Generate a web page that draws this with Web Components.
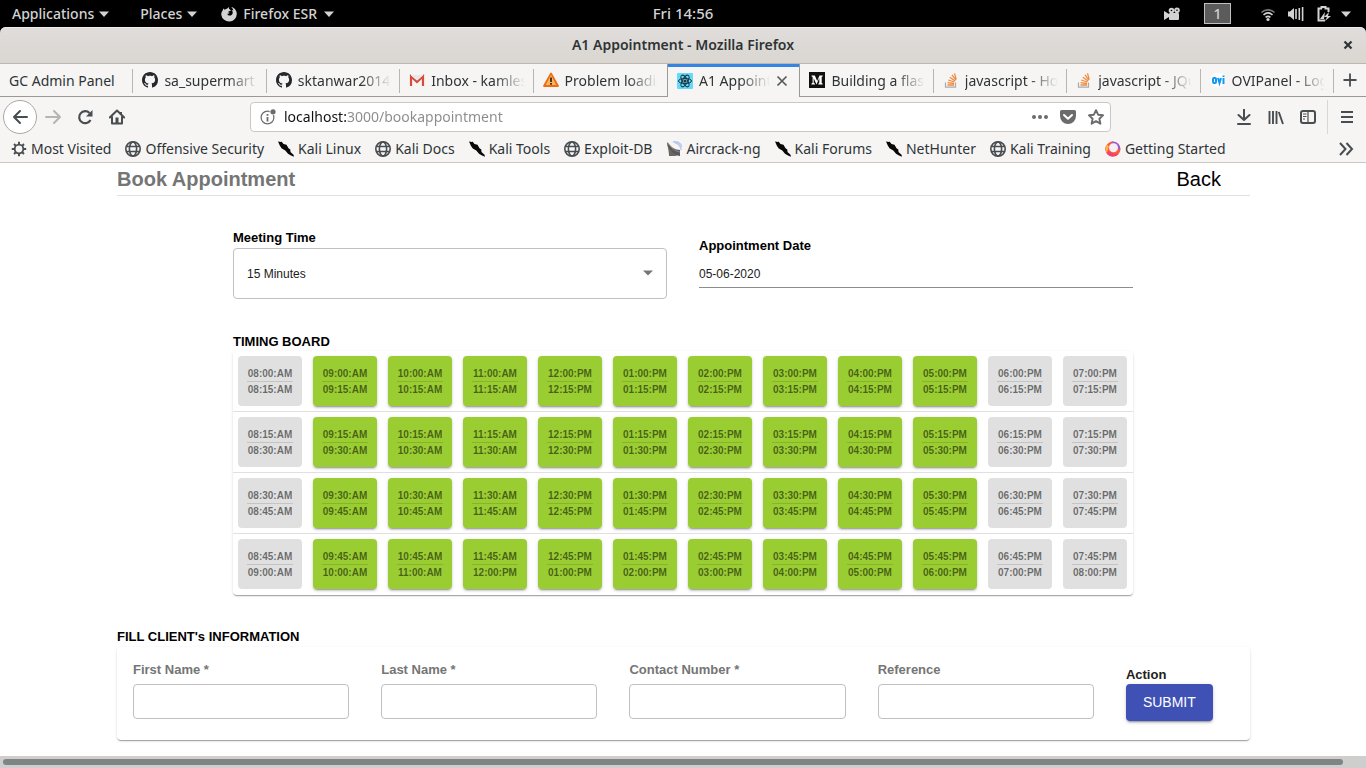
<!DOCTYPE html>
<html lang="en">
<head>
<meta charset="utf-8">
<title>A1 Appointment</title>
<style>
html, body { margin: 0; height: 100%; background: #fff; }
body { font-family: "Liberation Sans", Arial, sans-serif; }
</style>
</head>
<body>
<desk-shell></desk-shell>
<script>
const UI = '"Noto Sans", "Open Sans", sans-serif';

function define(name, html, setup) {
  const template = document.createElement('template');
  template.innerHTML = html;
  customElements.define(name, class extends HTMLElement {
    connectedCallback() {
      if (this.shadowRoot) return;
      const root = this.attachShadow({ mode: 'open' });
      root.append(template.content.cloneNode(true));
      if (setup) setup(this, root);
    }
  });
}

/* ---------- icons ---------- */
const ICONS = {
  caret: '<path d="M3 5.5h10L8 11z" fill="#d3d3d3"/>',
  fox: '<path d="M2.2 2.5l1.6 1.3C4.600 3.200 5.500 2.700 6.300 2.600L7.800 1l.3 2c1 .3 1.700 1 1.600 1.800L7.500 5.500c-.6.5.1 1.400 1.200 1.300-.5 1-1.500 1.200-2.500.9.5 1.600 2.200 2.300 3.700 1.700 2.300-.9 2.300-4 .7-5.400l1.700.5C11.900 3 11.300 1.900 10.200 1c3.400.7 5.600 3.500 5.600 7A7.800 7.800 0 0 1 .3 9C.1 7 .8 5.500 1.700 4.500z" fill="#d3d3d3"/>',
  camera: '<g fill="#d3d3d3"><circle cx="7.500" cy="4.500" r="2.800"/><circle cx="13" cy="4.200" r="2.800"/><rect x="5" y="7" width="10" height="7" rx="1"/><path d="M0 5l5 3v3l-5 3z"/></g><circle cx="7.500" cy="4.500" r=".8"/><circle cx="13" cy="4.200" r=".8"/>',
  wifi: '<g fill="none" stroke="#d3d3d3" stroke-width="1.700"><path d="M1.500 6.500c3.700-3.600 9.300-3.600 13 0" stroke="#777"/><path d="M3.500 9c2.700-2.500 6.300-2.500 9 0"/><path d="M5.600 11.400c1.500-1.300 3.300-1.300 4.800 0"/></g><circle cx="8" cy="13.500" r="1.600" fill="#d3d3d3"/>',
  volume: '<path d="M0 5.500h2L6 2v12L2 10.500H0z" fill="#d3d3d3"/><path d="M8 3v10M11.300 2v12M14.600 1v14" stroke="#d3d3d3" stroke-width="1.600"/>',
  battery: '<path d="M5.500 2.500V1h4v1.500h3V6M9 14.500H2.500v-12H6" fill="none" stroke="#d3d3d3" stroke-width="2"/><path d="M4 13l5-7-1 7zM13 6l-5 5h3l-2 4 6-5h-3z" fill="#d3d3d3"/>',
  close: '<path d="M3.500 3.500l9 9m0-9l-9 9" stroke="#555b5d" stroke-width="1.700"/>',
  bigclose: '<path d="M4.500 4.500l7 7m0-7l-7 7" stroke="#2e3436" stroke-width="2.200"/>',
  github: '<path fill="#24292e" d="M8 0C3.580 0 0 3.580 0 8c0 3.540 2.290 6.530 5.470 7.590.4.070.55-.17.55-.38 0-.19-.01-.82-.01-1.490-2.010.37-2.530-.49-2.690-.94-.09-.23-.48-.94-.82-1.130-.28-.15-.68-.52-.01-.53.63-.01 1.080.58 1.230.82.72 1.210 1.870.87 2.330.66.07-.52.28-.87.51-1.070-1.780-.2-3.640-.89-3.640-3.950 0-.87.31-1.590.82-2.150-.08-.2-.36-1.020.08-2.120 0 0 .67-.21 2.200.82.64-.18 1.320-.27 2-.27s1.360.09 2 .27c1.530-1.040 2.200-.82 2.200-.82.44 1.100.16 1.920.08 2.120.51.56.82 1.270.82 2.150 0 3.070-1.870 3.750-3.650 3.950.29.25.54.73.54 1.480 0 1.070-.01 1.930-.01 2.200 0 .21.15.46.55.38A8 8 0 0 0 16 8c0-4.420-3.580-8-8-8z"/>',
  gmail: '<path d="M1 3h14v11H1z" fill="#e8e8e8"/><path d="M3 5l5 4.500L13 5v9H3z" fill="#f7f5f5"/><path d="M2 14V4.500L8 10l6-5.500V14" fill="none" stroke="#d54b3d" stroke-width="2.200"/><path d="M2 3l6 5 6-5" fill="none" stroke="#f6eeee"/>',
  warning: '<path d="M8 1.500L15 14H1z" fill="#f79a2c" stroke="#ec6d13" stroke-width="1.800" stroke-linejoin="round"/><path d="M8 3L13 13H3z" fill="#fbb45e"/><path d="M8 5.500v4.500M8 11v1.700" stroke="#3a2a1a" stroke-width="1.800"/>',
  react: '<rect width="16" height="16" rx="1" fill="#61dafb"/><g fill="none" stroke="#20323c" stroke-width="1"><ellipse cx="8" cy="8" rx="6.500" ry="2.600"/><ellipse cx="8" cy="8" rx="6.500" ry="2.600" transform="rotate(60 8 8)"/><ellipse cx="8" cy="8" rx="6.500" ry="2.600" transform="rotate(120 8 8)"/></g><circle cx="8" cy="8" r="1.500" fill="#20323c"/>',
  medium: '<rect width="16" height="16" fill="#12100e"/><path d="M2.500 3.500h3.300L8.200 9l2.300-5.500h3.200v.8l-1 .7v6l1 .7v.8H9.300v-.8l1-.8V6l-2.800 6.500L4.700 6.200v4.500l1.300 1v.8H2.400v-.8l1.200-1V5L2.500 4.200z" fill="#fff"/>',
  stack: '<path d="M2.500 10.500v4.700h10v-4.700" fill="none" stroke="#aaa" stroke-width="1.200"/><path d="M4.500 13h6.500M4.600 10.600l6.400.9M5.200 8l6.200 2M6.800 5.300l5.300 3.700M9 2.900l3.900 5.200M11.500 1.400l1.700 6" stroke="#f08a3c" stroke-width="1.300"/>',
  ovi: '<circle cx="8" cy="8" r="7.500" fill="#fff"/><g fill="none" stroke="#1199f2" stroke-width="2"><rect x="3" y="6" width="3" height="5" rx="1"/><path d="M8 6l1.500 5L11 6M13.500 6v6M13.500 3.500V5"/></g>',
  plus: '<path d="M8 1.500v13M1.500 8h13" stroke="#474d50" stroke-width="1.800"/>',
  back: '<path d="M15 8H2M8 2L2 8l6 6" fill="none" stroke="#474d50" stroke-width="2" stroke-linecap="round" stroke-linejoin="round"/>',
  forward: '<path d="M1 8h14M9 2l6 6-6 6" fill="none" stroke="#b5b5b4" stroke-width="2" stroke-linecap="round" stroke-linejoin="round"/>',
  reload: '<path d="M13.500 11A6 6 0 1 1 12.500 4" fill="none" stroke="#474d50" stroke-width="2.200"/><path d="M15.500 1v6.500H9z" fill="#474d50"/>',
  home: '<path d="M.8 8.500L8 1.500l7.200 7M3 8v6.500h10V8" fill="none" stroke="#474d50" stroke-width="2" stroke-linecap="round" stroke-linejoin="round"/><path d="M6.500 8.500h3V15h-3z" fill="#474d50"/><path d="M12 3v2" stroke="#474d50" stroke-width="2"/>',
  info: '<circle cx="7.500" cy="8.500" r="6.400" fill="none" stroke="#6b6b6b" stroke-width="1.200"/><path d="M7.500 5v1.700M7.500 8v4.500" stroke="#6b6b6b" stroke-width="1.800"/><circle cx="13" cy="2.800" r="3.400" fill="#fff"/><circle cx="13" cy="2.800" r="2.600" fill="#6b6b6b"/>',
  dots: '<g fill="#6b6b6b"><circle cx="2" cy="8" r="2"/><circle cx="8" cy="8" r="2"/><circle cx="14" cy="8" r="2"/></g>',
  pocket: '<path d="M1.500 1h13A1.500 1.500 0 0 1 16 2.500V7A8 8 0 0 1 0 7V2.500A1.500 1.500 0 0 1 1.500 1z" fill="#6b6b6b"/><path d="M4 6l4 3.800L12 6" fill="none" stroke="#fff" stroke-width="2" stroke-linecap="round" stroke-linejoin="round"/>',
  star: '<path d="M8 1.200l2.100 4.500 4.900.6-3.600 3.400 1 5L8 12.200l-4.400 2.500 1-5L1 6.300l4.900-.6z" fill="none" stroke="#6b6b6b" stroke-width="1.900" stroke-linejoin="round"/>',
  download: '<path d="M8 .5v10M2.500 6L8 11l5.500-5M2 15h12" fill="none" stroke="#474d50" stroke-width="2" stroke-linecap="round" stroke-linejoin="round"/>',
  library: '<path d="M1.500 2v13M5 2v13M8.500 2v13M10.800 3l4.200 12" stroke="#474d50" stroke-width="1.900"/>',
  sidebar: '<rect x="1" y="2" width="14" height="12" rx="2" fill="none" stroke="#474d50" stroke-width="2"/><path d="M8 2v12M3 5h3.500M3 7.500h3.500M3 10h2" stroke="#474d50" stroke-width="1.200"/>',
  menu: '<path d="M2 3h12M2 8h12M2 13h12" stroke="#474d50" stroke-width="2"/>',
  gear: '<circle cx="8" cy="8" r="4.300" fill="none" stroke="#474d50" stroke-width="1.800"/><path d="M8 .8v3M8 12.200v3M.8 8h3M12.200 8h3M3 3l2 2M11 11l2 2M3 13l2-2M11 5l2-2" stroke="#474d50" stroke-width="1.900"/>',
  globe: '<g fill="none" stroke="#474d50" stroke-width="1.600"><circle cx="8" cy="8" r="7.200"/><ellipse cx="8" cy="8" rx="3.600" ry="7"/><path d="M1.500 5.500h13M1.500 10.500h13"/></g>',
  kali: '<path d="M0 .5l3 .5.500-.5L5.500 3l3 .7 2 3.500 1.800 1.300L12.500 11l3 2.800.5 2-3-1.300-3-1.700-2.700-3.300-3.500-2L2 5z" fill="#080808"/>',
  aircrack: '<path d="M1 1c1 9 5 13 13 14V9C9 9 5 6 1 1z" fill="#57595b"/><path d="M1 1c1 7 2 9 2 14h8C6 12 3 8 1 1z" fill="#6b675e"/><path d="M2 2c3 5 7 8 12 9" fill="none" stroke="#8d8d8d"/><path d="M9 2c3 0 6 3 6 7M7 1c4-1 8 1 9 5" fill="none" stroke="#b9caec" stroke-width="1.500"/>',
  getting: '<circle cx="8" cy="8" r="7.500" fill="#ff5a3c"/><path d="M8 15.500A7.500 7.500 0 0 1 1 5c0 5 6 8 12.500 8A7 7 0 0 1 8 15.500z" fill="#f2416f"/><path d="M1.500 4A7.500 7.500 0 0 0 2 12l2-7z" fill="#ffb23e"/><path d="M6 .8a7.500 7.500 0 0 1 9 9L12 5z" fill="#8860ee"/><circle cx="8.500" cy="6.800" r="4.500" fill="#f4eef5"/>',
  more: '<path d="M2 2l5.500 6L2 14M8.500 2L14 8l-5.500 6" fill="none" stroke="#474d50" stroke-width="2"/>',
  drop: '<path d="M3 5.500h10L8 10.500z" fill="#757575"/>'
};
define('ui-icon', `<style>:host{display:block;flex:none;width:16px;height:16px}svg{display:block;width:100%;height:100%}</style>`,
  (el, root) => root.append(document.createRange().createContextualFragment(
    `<svg viewBox="0 0 16 16" aria-hidden="true">${ICONS[el.getAttribute('name')]}</svg>`)));

/* ---------- desktop panel ---------- */
define('top-panel', `<style>
:host{display:grid;grid-template-columns:1fr auto 1fr;align-items:center;height:27px;background:#000;color:#d3d3d3;font:500 14px/27px ${UI}}
nav,.tray{display:flex;align-items:center}
nav{padding-left:12px;gap:28px}
time{font-size:15px}
button{display:flex;align-items:center;border:0;padding:0;background:none;color:inherit;font:inherit;gap:2px}
.app{gap:6px;margin-left:-7px}
.app span{display:flex;align-items:center;gap:4px}
.tray{justify-content:flex-end;padding-right:12px;gap:12px}
.ws{box-sizing:border-box;width:27px;height:21px;line-height:19px;border:1px solid #c0c0c0;background:#5b5b5b;justify-content:center;margin:0 17px 0 12px}
.tray ui-icon:last-child{margin-left:-6px}
</style>
<nav><button>Applications<ui-icon name="caret"></ui-icon></button><button>Places<ui-icon name="caret"></ui-icon></button><button class="app"><ui-icon name="fox"></ui-icon><span>Firefox ESR<ui-icon name="caret"></ui-icon></span></button></nav>
<time>Fri 14:56</time>
<div class="tray"><ui-icon name="camera"></ui-icon><button class="ws">1</button><ui-icon name="wifi"></ui-icon><ui-icon name="volume"></ui-icon><ui-icon name="battery"></ui-icon><ui-icon name="caret"></ui-icon></div>`);

define('title-bar', `<style>
:host{display:block;background:#000}
div{display:grid;grid-template-columns:1fr auto 1fr;align-items:center;height:36px;border-bottom:1px solid #bdb7b0;border-radius:6px 6px 0 0;background:linear-gradient(#e0ddda,#dad6d2);box-shadow:inset 0 1px #edebe9;color:#2e3436;font:600 14px/36px ${UI}}
button{grid-column:3;justify-self:end;margin-right:10px;border:0;padding:0;background:none}
span{grid-column:2}
</style><div><span><slot></slot></span><button aria-label="Close window"><ui-icon name="bigclose"></ui-icon></button></div>`);

/* ---------- tabs ---------- */
define('browser-tab', `<style>
:host{display:flex;min-width:0;box-sizing:border-box;height:33px;align-items:center;padding:0 9px;border-bottom:1px solid #9a9996;
 background:linear-gradient(#b9b6b2,#b9b6b2) right 5px/1px 24px no-repeat}
:host([active]){border:1px solid #9a9996;border-width:0 1px;background:linear-gradient(#3584e4,#3584e4) top/100% 3px no-repeat #f6f5f4}
:host([before]){background:none}
ui-icon{margin-right:6px}
a{flex:1;min-width:0;overflow:hidden;white-space:nowrap;color:#2e3436;text-decoration:none;font:14px/33px ${UI}}
a.fade{-webkit-mask-image:linear-gradient(to left,transparent,#000 30px);mask-image:linear-gradient(to left,transparent,#000 30px)}
button{border:0;padding:0;background:none;margin:0 0 0 4px}
button ui-icon{margin:0}
</style><a href="#"><slot></slot></a>`, (el, root) => {
  const link = root.querySelector('a'), icon = el.getAttribute('icon');
  if (icon) { link.insertAdjacentHTML('beforebegin', `<ui-icon name="${icon}"></ui-icon>`); link.className = 'fade'; }
  if (el.hasAttribute('active')) link.insertAdjacentHTML('afterend', '<button aria-label="Close tab"><ui-icon name="close"></ui-icon></button>');
});
define('tab-strip', `<style>
:host{display:flex;background:#f6f5f4}
slot{display:grid;grid-auto-flow:column;grid-auto-columns:minmax(0,1fr);flex:1;min-width:0}
button{box-sizing:border-box;width:32px;height:33px;border:0;border-bottom:1px solid #9a9996;background:none;padding:0;display:grid;place-items:center}
</style><slot></slot><button aria-label="New tab"><ui-icon name="plus"></ui-icon></button>`);

/* ---------- navigation ---------- */
define('nav-bar', `<style>
:host{display:flex;align-items:center;height:40px;background:#f6f5f4}
button{border:0;padding:0;background:none;display:grid;place-items:center;width:32px;height:32px;flex:none}
.back{box-sizing:border-box;width:34px;height:34px;border:1px solid #a9a8a6;border-radius:50%;background:#fff;margin:0 0 0 3px}
.left{display:flex;flex:0 0 250px;align-items:center}
.url{box-sizing:border-box;flex:1;min-width:0;height:30px;display:flex;align-items:center;border:1px solid #cdc7c2;border-radius:4px;background:#fff;padding:0 0 0 9px}
.url button{width:28px;height:28px}
input{flex:1;min-width:0;border:0;outline:0;margin-left:8px;padding:0;height:28px;font:14px/28px ${UI};
 color:transparent;background:linear-gradient(90deg,#111 62px,#8b8b8b 62px);-webkit-background-clip:text;background-clip:text}
.right{display:flex;flex:0 0 255px;justify-content:flex-end;align-items:center}
.menu{border-left:1px solid #d9d7d5;width:39px;height:34px;margin-left:3px}
</style>
<div class="left"><button class="back" aria-label="Back"><ui-icon name="back"></ui-icon></button><button aria-label="Forward"><ui-icon name="forward"></ui-icon></button><button aria-label="Reload"><ui-icon name="reload"></ui-icon></button><button aria-label="Home"><ui-icon name="home"></ui-icon></button></div>
<div class="url"><ui-icon name="info"></ui-icon><input aria-label="Address" value="localhost:3000/bookappointment"><button aria-label="Page actions"><ui-icon name="dots"></ui-icon></button><button aria-label="Pocket"><ui-icon name="pocket"></ui-icon></button><button aria-label="Bookmark"><ui-icon name="star"></ui-icon></button></div>
<div class="right"><button aria-label="Downloads"><ui-icon name="download"></ui-icon></button><button aria-label="Library"><ui-icon name="library"></ui-icon></button><button aria-label="Sidebars"><ui-icon name="sidebar"></ui-icon></button><button class="menu" aria-label="Menu"><ui-icon name="menu"></ui-icon></button></div>`);

define('bookmark-link', `<style>
:host{display:block;flex:none}
a{display:flex;align-items:center;gap:4px;color:#2e3436;text-decoration:none;font:14px/22px ${UI};white-space:nowrap}
</style><a href="#"><slot></slot></a>`, (el, root) =>
  root.querySelector('a').insertAdjacentHTML('afterbegin', `<ui-icon name="${el.getAttribute('icon')}"></ui-icon>`));
define('bookmark-bar', `<style>
:host{display:flex;align-items:center;gap:14px;height:24px;padding:0 12px 1px 11px;background:#f6f5f4;border-bottom:1px solid #cdc7c2}
button{margin-left:auto;border:0;padding:0;background:none}
</style><slot></slot><button aria-label="More bookmarks"><ui-icon name="more"></ui-icon></button>`);

/* ---------- booking page ---------- */
define('page-heading', `<style>
:host{display:flex;justify-content:space-between;align-items:center;height:32px;border-bottom:1px solid #e0e0e0;padding-right:29px}
h1{margin:0;font-size:20px;line-height:32px;color:#757575}
a{font-size:20px;line-height:32px;color:#000;text-decoration:none}
</style><h1><slot></slot></h1><a href="#">Back</a>`);

define('meeting-select', `<style>
:host{display:block}
label{display:block;font-weight:700;font-size:13px;line-height:20px}
div{position:relative}
select{appearance:none;box-sizing:border-box;width:100%;height:51px;border:1px solid #c0c0c0;border-radius:4px;background:#fff;padding:0 32px 0 13px;color:#212121;font:12px "Liberation Sans",Arial,sans-serif}
ui-icon{position:absolute;right:11px;top:17px;pointer-events:none}
</style><label for="m">Meeting Time</label><div><select id="m"><option>15 Minutes</option><option>30 Minutes</option></select><ui-icon name="drop"></ui-icon></div>`);

define('date-field', `<style>
:host{display:block;padding-top:8px}
label{display:block;font-weight:700;font-size:13px;line-height:20px}
input{display:block;box-sizing:border-box;width:100%;height:32px;border:0;border-bottom:1px solid #8c8c8c;outline:0;background:none;padding:4px 0 0;color:#212121;font:12px "Liberation Sans",Arial,sans-serif}
</style><label for="d">Appointment Date</label><input id="d" value="05-06-2020">`);

define('time-slot', `<style>
:host{display:block}
button{display:block;box-sizing:border-box;width:100%;height:50px;border:0;border-radius:4px;padding:2px 4px 0;background:#9acd32;color:rgba(0,0,0,.54);font:700 10px/16px "Liberation Sans",Arial,sans-serif;box-shadow:0 3px 1px -2px rgba(0,0,0,.2),0 2px 2px rgba(0,0,0,.14),0 1px 4px rgba(0,0,0,.12)}
button:disabled{background:#e0e0e0;box-shadow:none}
span{display:block;width:46px;margin:auto;white-space:nowrap}
span+span{box-shadow:0 -1px rgba(0,0,0,.12)}
</style><button><span></span><span></span></button>`, (el, root) => {
  const [from, to] = root.querySelectorAll('span');
  from.textContent = el.getAttribute('from');
  to.textContent = el.getAttribute('to');
  root.querySelector('button').disabled = el.hasAttribute('closed');
});

define('timing-board', `<style>
:host{display:block}
h2{margin:0;font-size:13px;line-height:18px}
table{width:100%;table-layout:fixed;border-collapse:separate;border-spacing:0;border-radius:4px;box-shadow:0 2px 1px -1px rgba(0,0,0,.2),0 1px 1px rgba(0,0,0,.14),0 1px 3px rgba(0,0,0,.12)}
td{padding:5px 6px 5px 5px;border-bottom:1px solid #e0e0e0}
tr:last-child td{border-bottom-color:transparent}
</style><h2>TIMING BOARD</h2><table><tbody></tbody></table>`, (el, root) => {
  const label = m => {
    const h = Math.floor(m / 60), pad = n => String(n).padStart(2, '0');
    return `${pad(h % 12 || 12)}:${pad(m % 60)}:${h < 12 ? 'AM' : 'PM'}`;
  };
  let rows = '';
  for (let q = 0; q < 60; q += 15) {
    rows += '<tr>';
    for (let h = 8; h < 20; h++) {
      const t = h * 60 + q;
      rows += `<td><time-slot from="${label(t)}" to="${label(t + 15)}"${h < 9 || h > 17 ? ' closed' : ''}></time-slot></td>`;
    }
    rows += '</tr>';
  }
  root.querySelector('tbody').innerHTML = rows;
});

define('text-field', `<style>
:host{display:block}
label{display:block;font-weight:700;font-size:13px;line-height:16px;color:#757575;margin-bottom:6px}
input{display:block;box-sizing:border-box;width:100%;height:35px;border:1px solid #c0c0c0;border-radius:4px;background:#fff;padding:0 12px;font:13px "Liberation Sans",Arial,sans-serif}
</style><label for="i"></label><input id="i">`, (el, root) => {
  root.querySelector('label').textContent = el.getAttribute('label');
});

define('client-form', `<style>
:host{display:block}
h2{margin:0;font-size:13px;line-height:20px}
form{display:grid;grid-template-columns:2fr 2fr 2fr 2fr 1fr;gap:32px;padding:15px 16px 19px;border-radius:4px;box-shadow:0 2px 1px -1px rgba(0,0,0,.2),0 1px 1px rgba(0,0,0,.14),0 1px 3px rgba(0,0,0,.12)}
.act{padding-top:4px}
label{display:block;font-weight:700;font-size:13px;line-height:18px;color:#212121}
button{height:37px;border:0;border-radius:4px;padding:0 17px 2px;background:#3f51b5;color:#fff;font:14px "Liberation Sans",Arial,sans-serif;box-shadow:0 3px 1px -2px rgba(0,0,0,.2),0 2px 2px rgba(0,0,0,.14),0 1px 5px rgba(0,0,0,.12)}
</style><h2>FILL CLIENT's INFORMATION</h2>
<form><text-field label="First Name *"></text-field><text-field label="Last Name *"></text-field><text-field label="Contact Number *"></text-field><text-field label="Reference"></text-field><div class="act"><label for="s">Action</label><button id="s" type="button">SUBMIT</button></div></form>`);

define('booking-page', `<style>
:host{display:block;flex:1;padding:0 116px 0 117px}
.inner{padding:0 117px 0 116px}
.row{display:grid;grid-template-columns:1fr 1fr;gap:32px;margin:32px 0 34px}
client-form{margin-top:32px}
</style><page-heading>Book Appointment</page-heading>
<div class="inner"><div class="row"><meeting-select></meeting-select><date-field></date-field></div><timing-board></timing-board></div>
<client-form></client-form>`);

define('scroll-track', `<style>
:host{display:block;box-sizing:border-box;height:12px;border-top:1px solid #d3cdc4;background:#cecece;padding:2px 23px 3px 3px}
div{height:6px;border-radius:3px;background:#7f8584}
</style><div></div>`);

define('desk-shell', `<style>
:host{display:flex;flex-direction:column;min-height:100vh}
</style>
<top-panel></top-panel>
<title-bar>A1 Appointment - Mozilla Firefox</title-bar>
<tab-strip>
<browser-tab>GC Admin Panel</browser-tab>
<browser-tab icon="github">sa_supermart</browser-tab>
<browser-tab icon="github">sktanwar2014</browser-tab>
<browser-tab icon="gmail">Inbox - kamlesh</browser-tab>
<browser-tab icon="warning" before>Problem loading</browser-tab>
<browser-tab icon="react" active>A1 Appointment</browser-tab>
<browser-tab icon="medium">Building a flash</browser-tab>
<browser-tab icon="stack">javascript - How</browser-tab>
<browser-tab icon="stack">javascript - JQuery</browser-tab>
<browser-tab icon="ovi">OVIPanel - Login</browser-tab>
</tab-strip>
<nav-bar></nav-bar>
<bookmark-bar>
<bookmark-link icon="gear">Most Visited</bookmark-link>
<bookmark-link icon="globe">Offensive Security</bookmark-link>
<bookmark-link icon="kali">Kali Linux</bookmark-link>
<bookmark-link icon="globe">Kali Docs</bookmark-link>
<bookmark-link icon="kali">Kali Tools</bookmark-link>
<bookmark-link icon="globe">Exploit-DB</bookmark-link>
<bookmark-link icon="aircrack">Aircrack-ng</bookmark-link>
<bookmark-link icon="kali">Kali Forums</bookmark-link>
<bookmark-link icon="kali">NetHunter</bookmark-link>
<bookmark-link icon="globe">Kali Training</bookmark-link>
<bookmark-link icon="getting">Getting Started</bookmark-link>
</bookmark-bar>
<booking-page></booking-page>
<scroll-track></scroll-track>`);
</script>
</body>
</html>
